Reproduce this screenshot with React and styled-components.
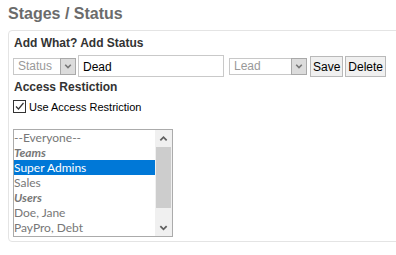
import React from 'react';
import styled, { createGlobalStyle } from "styled-components";

const Global = createGlobalStyle`
    body {
        margin: 0;
        background: #fff;
        font-family: Arial, "Liberation Sans", sans-serif;
    }
`;

const Page = styled.div`
    padding: 3px 0 0 8px;
    width: 420px;
`;

const Title = styled.h2`
    margin: 0 0 5px;
    font-size: 16px;
    line-height: 22px;
    font-weight: bold;
    color: #6b6b6b;
`;

const Panel = styled.div`
    border: 1px solid #e4e4e4;
    border-radius: 4px;
    padding: 4px 0 3px 4px;
    height: 203px;
`;

const Heading = styled.h4`
    margin: 0 0 0 1px;
    font-size: 12px;
    line-height: 16px;
    font-weight: bold;
    color: #333;
`;

const FormRow = styled.div`
    display: flex;
    align-items: center;
    gap: 2px;
    margin: 4px 0 2px;
`;

const Select = styled.div`
    display: flex;
    align-items: center;
    justify-content: space-between;
    width: ${p => p.w}px;
    height: 17px;
    box-sizing: border-box;
    border: 1px solid #c8c8c8;
    margin-right: ${p => p.mr || 0}px;
    font-size: 12px;
    color: #999;
    padding-left: 4px;
    background: #fff;
`;

const Arrow = styled.span`
    display: flex;
    align-items: center;
    justify-content: center;
    width: 16px;
    height: 17px;
    box-sizing: border-box;
    margin: -1px -1px -1px 0;
    border: 1px solid #a9a9a9;
    background: #dcdcdc;
`;

const TextBox = styled.div`
    width: 146px;
    height: 22px;
    box-sizing: border-box;
    border: 1px solid #c9c9c9;
    padding: 4px 0 0 4px;
    font-size: 12px;
    color: #000;
    margin-right: 3px;
`;

const Button = styled.div`
    height: 21px;
    box-sizing: border-box;
    border: 1px solid #b9b9b9;
    background: #f0f0f0;
    padding: 3px 2px 0;
    font-size: 12px;
    color: #000;
`;

const Check = styled.label`
    display: flex;
    align-items: center;
    gap: 3px;
    margin: 5px 0 0 0;
    font-size: 11px;
    color: #000;
`;

const Box = styled.span`
    display: flex;
    width: 13px;
    height: 13px;
    box-sizing: border-box;
    border: 1px solid #333;
    background: #fff;
`;

const ListBox = styled.div`
    display: flex;
    width: 160px;
    height: 108px;
    box-sizing: border-box;
    border: 1px solid #ababab;
    margin-top: 16px;
`;

const Options = styled.div`
    flex: 1;
    overflow: hidden;
`;

const Option = styled.div`
    height: 15px;
    line-height: 15px;
    font-family: Lato, "Open Sans", sans-serif;
    font-size: 12px;
    font-weight: ${p => p.group ? 'bold' : 'normal'};
    font-style: ${p => p.group ? 'italic' : 'normal'};
    color: ${p => p.selected ? '#fff' : '#777'};
    background: ${p => p.selected ? '#0078d7' : 'transparent'};
`;

const Scroll = styled.div`
    display: flex;
    flex-direction: column;
    width: 17px;
    background: #f0f0f0;
`;

const ScrollBtn = styled.div`
    display: flex;
    align-items: center;
    justify-content: center;
    height: 17px;
`;

const Thumb = styled.div`
    margin: 0 1px;
    height: 61px;
    background: #cdcdcd;
`;

const Chevron = ({ up, color = "#606060", size = 9 }) => (
    <svg width={size} height={size} viewBox="0 0 10 10">
        <path d={up ? "M1.5 7 L5 3.5 L8.5 7" : "M1.5 3.5 L5 7 L8.5 3.5"} fill="none" stroke={color} strokeWidth="2" />
    </svg>
);

const items = [
    { label: "--Everyone--" },
    { label: "Teams", group: true },
    { label: "Super Admins", selected: true },
    { label: "Sales" },
    { label: "Users", group: true },
    { label: "Doe, Jane" },
    { label: "PayPro, Debt" },
];

const App = () => (
    <Page>
        <Global />
        <Title>Stages / Status</Title>
        <Panel>
            <Heading>Add What? Add Status</Heading>
            <FormRow>
                <Select w={63}>
                    Status
                    <Arrow><Chevron color="#777" size={8} /></Arrow>
                </Select>
                <TextBox>Dead</TextBox>
                <Select w={78} mr={1}>
                    Lead
                    <Arrow><Chevron color="#777" size={8} /></Arrow>
                </Select>
                <Button>Save</Button>
                <Button>Delete</Button>
            </FormRow>
            <Heading>Access Restiction</Heading>
            <Check>
                <Box>
                    <svg width="11" height="11" viewBox="0 0 11 11">
                        <path d="M2 5.5 L4.5 8 L9.5 2" fill="none" stroke="#333" strokeWidth="1.2" />
                    </svg>
                </Box>
                Use Access Restriction
            </Check>
            <ListBox>
                <Options>
                    {items.map(it => (
                        <Option key={it.label} group={it.group} selected={it.selected}>{it.label}</Option>
                    ))}
                </Options>
                <Scroll>
                    <ScrollBtn><Chevron up /></ScrollBtn>
                    <Thumb />
                    <div style={{ flex: 1 }} />
                    <ScrollBtn><Chevron /></ScrollBtn>
                </Scroll>
            </ListBox>
        </Panel>
    </Page>
);

export default App;
